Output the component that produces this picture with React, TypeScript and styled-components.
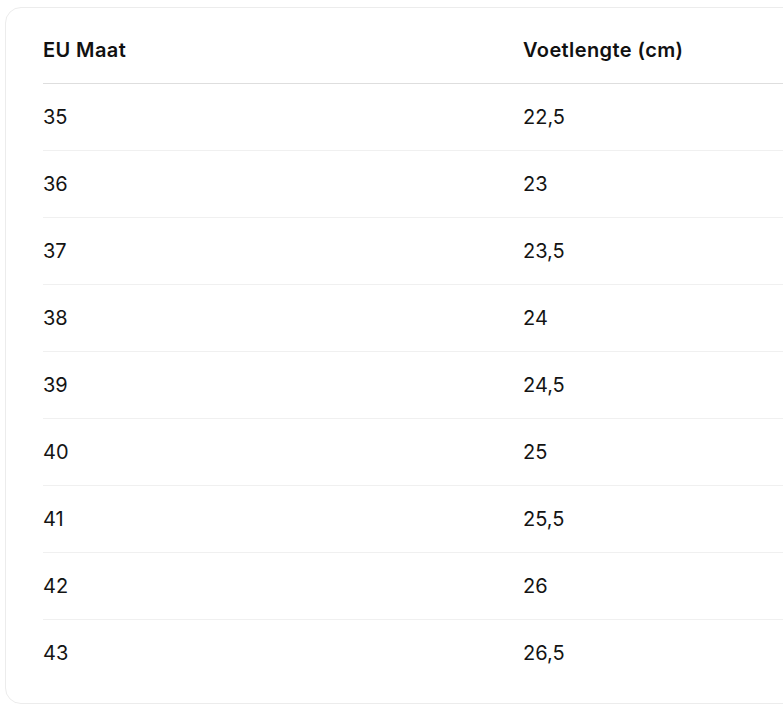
import React from "react";
import styled, { createGlobalStyle } from "styled-components";

const GlobalStyle = createGlobalStyle`
  html, body {
    margin: 0;
    padding: 0;
    background: #ffffff;
    overflow: hidden;
  }
  body {
    font-family: Inter, "Noto Sans", "Liberation Sans", sans-serif;
    color: #111111;
  }
`;

const Card = styled.div`
  margin: 7px 0 0 5px;
  width: 1400px;
  border: 1px solid #ececec;
  border-radius: 16px;
  padding: 8px 0 17px 37px;
  background: #ffffff;
`;

const Table = styled.table`
  border-collapse: collapse;
  table-layout: fixed;
  width: 1440px;
  font-size: 20px;
  line-height: 24px;
`;

const HeadCell = styled.th`
  width: 480px;
  height: 67px;
  padding: 0;
  text-align: left;
  font-weight: 600;
  letter-spacing: 0.4px;
  color: #111111;
  border-bottom: 1px solid #dedede;
  vertical-align: middle;
`;

const Row = styled.tr<{ $last?: boolean }>`
  border-bottom: ${(p) => (p.$last ? "none" : "1px solid #f0f0f0")};
`;

const Cell = styled.td`
  height: 66px;
  padding: 0;
  font-weight: 400;
  color: #141414;
  vertical-align: middle;
`;

const sizes: [string, string][] = [
  ["35", "22,5"],
  ["36", "23"],
  ["37", "23,5"],
  ["38", "24"],
  ["39", "24,5"],
  ["40", "25"],
  ["41", "25,5"],
  ["42", "26"],
  ["43", "26,5"],
];

export default function App() {
  return (
    <>
      <GlobalStyle />
      <Card>
        <Table>
          <thead>
            <tr>
              <HeadCell>EU Maat</HeadCell>
              <HeadCell>Voetlengte (cm)</HeadCell>
              <HeadCell></HeadCell>
            </tr>
          </thead>
          <tbody>
            {sizes.map(([eu, cm], i) => (
              <Row key={eu} $last={i === sizes.length - 1}>
                <Cell>{eu}</Cell>
                <Cell>{cm}</Cell>
                <Cell></Cell>
              </Row>
            ))}
          </tbody>
        </Table>
      </Card>
    </>
  );
}
